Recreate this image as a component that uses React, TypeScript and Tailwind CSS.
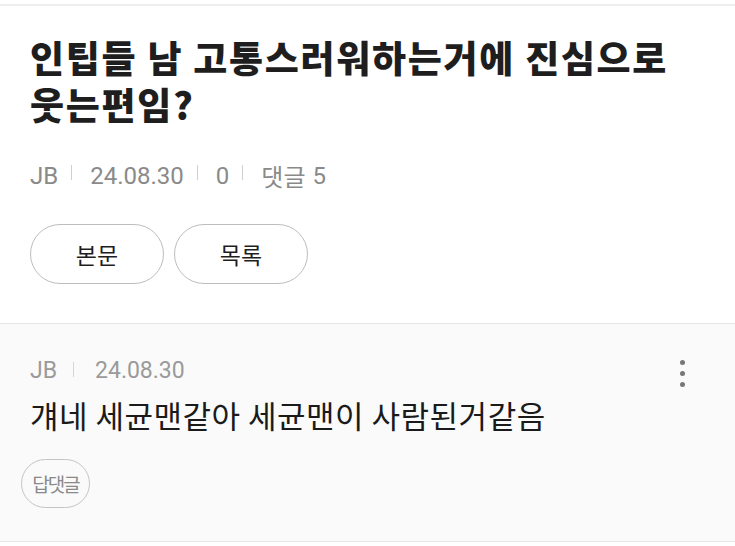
import React from "react";

const Sep = () => (
  <span className="inline-block w-px h-[15px] bg-[#d0d0d0] ml-[13px] mr-[18px] -translate-y-[4px]" />
);

export default function App() {
  return (
    <div
      className="w-[735px] h-[546px] bg-white overflow-hidden"
      style={{ fontFamily: "Roboto, 'Noto Sans CJK KR', sans-serif" }}
    >
      <div className="h-[4px]" />
      <div className="h-[2px] bg-[#eeeeee]" />
      <div className="px-[30px] pt-[28px] pb-[39px]">
        <h1
          className="text-[37px] leading-[47px] font-black text-[#1e1e1e] tracking-[1.7px]"
          style={{ fontFamily: "'Noto Sans CJK KR', sans-serif" }}
        >
          <span className="block">인팁들 남 고통스러워하는거에 진심으로</span>
          <span className="block">웃는편임?</span>
        </h1>
        <div className="mt-[33px] flex items-center text-[24px] leading-[30px] text-[#8a8a8a]">
          <span>JB</span>
          <Sep />
          <span>24.08.30</span>
          <Sep />
          <span>0</span>
          <Sep />
          <span style={{ fontFamily: "'Noto Sans CJK KR', sans-serif" }}>댓글</span>
          <span className="ml-[7px]">5</span>
        </div>
        <div className="mt-[33px] flex gap-[10px]">
          <button
            className="w-[134px] h-[60px] rounded-full border border-[#bdbdbd] text-[23px] text-[#1e1e1e]"
            style={{ fontFamily: "'Noto Sans CJK KR', sans-serif" }}
          >
            본문
          </button>
          <button
            className="w-[134px] h-[60px] rounded-full border border-[#bdbdbd] text-[23px] text-[#1e1e1e]"
            style={{ fontFamily: "'Noto Sans CJK KR', sans-serif" }}
          >
            목록
          </button>
        </div>
      </div>
      <div className="border-t border-b border-[#e6e6e6] bg-[#fafafa] pl-[30px] pr-[50px] pt-[32px] pb-[33px]">
        <div className="flex items-start justify-between">
          <div>
            <div className="flex items-center text-[23px] leading-[30px] text-[#9a9a9a]">
              <span>JB</span>
              <span className="inline-block w-px h-[15px] bg-[#d6d6d6] ml-[16px] mr-[21px] -translate-y-[2px]" />
              <span>24.08.30</span>
            </div>
          </div>
          <div className="flex flex-col gap-[6px] pt-[4px]">
            <span className="w-[5px] h-[5px] rounded-full bg-[#777]" />
            <span className="w-[5px] h-[5px] rounded-full bg-[#777]" />
            <span className="w-[5px] h-[5px] rounded-full bg-[#777]" />
          </div>
        </div>
        <div
          className="mt-[8px] text-[31px] leading-[40px] text-[#1a1a1a] tracking-[0.5px]"
          style={{ fontFamily: "'Noto Sans CJK KR', sans-serif" }}
        >
          걔네 세균맨같아 세균맨이 사람된거같음
        </div>
        <div className="mt-[24px] -ml-[9px] flex">
          <span
            className="w-[69px] h-[49px] rounded-full border border-[#c4c4c4] flex items-center justify-center text-[19px] leading-none text-[#8a8a8a] tracking-[-2px]"
            style={{ fontFamily: "'Noto Sans CJK KR', sans-serif" }}
          >
            답댓글
          </span>
        </div>
      </div>
    </div>
  );
}
